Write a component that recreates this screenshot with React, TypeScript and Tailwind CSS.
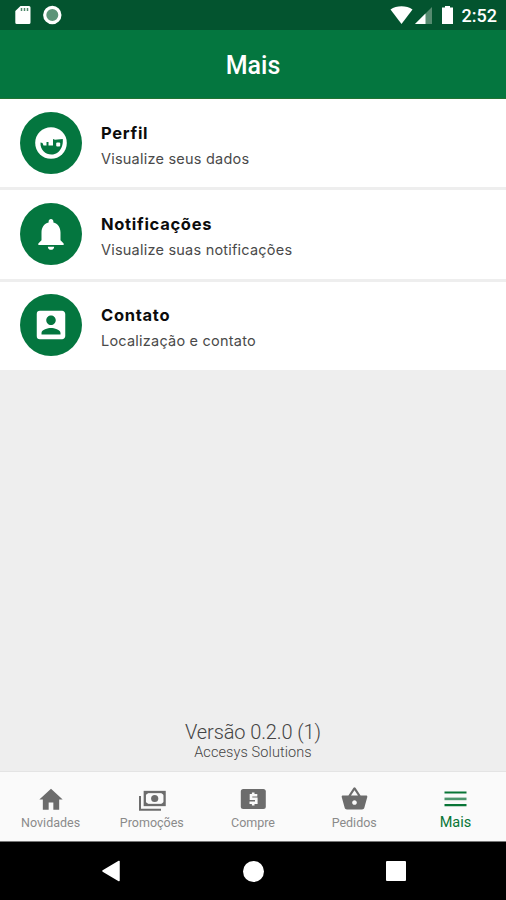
import React from 'react';

interface MenuItem {
  title: string;
  subtitle: string;
  icon: React.ReactNode;
}

interface TabItem {
  label: string;
  icon: React.ReactNode;
  active?: boolean;
}

const FaceIcon = () => (
  <svg width="32" height="32" viewBox="0 0 32 32">
    <circle cx="16" cy="16" r="15.8" fill="#fff" />
    <path d="M5.500 15.500L7.500 16L8.500 18.500H11.500V15H13.500V18.500H18V12L20 12.800L27.800 12C28 15 27.700 18 26.500 20.500C24.500 25 21 27.500 16.500 27.500C10.500 27.500 5 23 5.500 15.500Z" fill="#04763f" />
    <rect x="21.200" y="15.500" width="4" height="4" rx="1" fill="#fff" />
  </svg>
);

const BellIcon = () => (
  <svg width="38" height="38" viewBox="0 0 24 24" fill="#fff">
    <path d="M12 22c1.100 0 2-.9 2-2h-4c0 1.100.89 2 2 2zm6-6v-5c0-3.070-1.640-5.640-4.500-6.320V4c0-.83-.67-1.500-1.500-1.500s-1.500.67-1.500 1.500v.68C7.630 5.360 6 7.920 6 11v5l-2 2v1h16v-1l-2-2z" />
  </svg>
);

const ContactIcon = () => (
  <svg width="38" height="38" viewBox="0 0 24 24" fill="#fff">
    <path d="M3 5v14a2 2 0 0 0 2 2h14c1.100 0 2-.9 2-2V5c0-1.100-.9-2-2-2H5a2 2 0 0 0-2 2zm12 4c0 1.660-1.340 3-3 3s-3-1.340-3-3 1.340-3 3-3 3 1.340 3 3zm-9 8c0-2 4-3.100 6-3.100s6 1.100 6 3.100v1H6v-1z" />
  </svg>
);

const HomeIcon = () => (
  <svg width="28" height="29" viewBox="0 0 24 24" fill="currentColor" preserveAspectRatio="none">
    <path d="M10 20.500V14.500h4v6h5V12h3L12 3 2 12h3v8.500z" />
  </svg>
);

const CashIcon = () => (
  <svg className="mt-[3px]" width="28" height="22" viewBox="0 0 28 22" fill="none" stroke="currentColor">
    <path d="M2 6V19.700H23" strokeWidth="2" />
    <rect x="6.800" y="2" width="19.800" height="13" strokeWidth="2.300" />
    <path d="M6.500 2h5l-5 4zM27 2h-5l5 4zM6.500 15h5l-5-4zM27 15h-5l5-4z" fill="currentColor" stroke="none" />
    <circle cx="16.700" cy="8.500" r="3.600" fill="currentColor" stroke="none" />
  </svg>
);

const DollarIcon = () => (
  <svg width="26" height="22" viewBox="0 0 26 22">
    <rect x="0.800" y="1" width="25" height="20" rx="2.500" fill="currentColor" />
    <path d="M17.300 7.300H11v3.500h5.300v4H9.500M13.200 4.500v3m0 7v3" fill="none" stroke="#fafafa" strokeWidth="2.600" />
  </svg>
);

const BasketIcon = () => (
  <svg width="29" height="28" viewBox="0 0 24 24" fill="currentColor">
    <path d="M17.210 9l-4.380-6.560a1 1 0 0 0-1.660 0L6.790 9H2c-.55 0-1 .45-1 1 0 .09.010.18.040.27l2.540 9.270c.23.84 1 1.460 1.920 1.460h13c.92 0 1.690-.62 1.930-1.460l2.540-9.270L23 10c0-.55-.45-1-1-1h-4.790zM9 9l3-4.400L15 9H9zm3 8c-1.100 0-2-.9-2-2s.9-2 2-2 2 .9 2 2-.9 2-2 2z" />
  </svg>
);

const MenuIcon = () => (
  <svg width="24" height="18" viewBox="0 0 24 18">
    <path d="M1.500 2.500h22M1.500 15.200h22" stroke="#087536" strokeWidth="2.200" />
    <path d="M1.500 8.900h22" stroke="#4c956c" strokeWidth="2.600" />
  </svg>
);

const items: MenuItem[] = [
  { title: 'Perfil', subtitle: 'Visualize seus dados', icon: <FaceIcon /> },
  { title: 'Notificações', subtitle: 'Visualize suas notificações', icon: <BellIcon /> },
  { title: 'Contato', subtitle: 'Localização e contato', icon: <ContactIcon /> },
];

const tabs: TabItem[] = [
  { label: 'Novidades', icon: <HomeIcon /> },
  { label: 'Promoções', icon: <CashIcon /> },
  { label: 'Compre', icon: <DollarIcon /> },
  { label: 'Pedidos', icon: <BasketIcon /> },
  { label: 'Mais', icon: <MenuIcon />, active: true },
];

const StatusBar = () => (
  <div className="flex h-[30px] shrink-0 items-center justify-between bg-[#03542f] pr-[9px] pl-[15px] text-white">
    <div className="flex items-center gap-3">
      <svg width="16" height="20" viewBox="0 0 16 20">
        <path d="M5.500 1H14a1.500 1.500 0 0 1 1.500 1.500v15A1.500 1.500 0 0 1 14 19H1.800a1.500 1.500 0 0 1-1.500-1.500V6z" fill="#fff" />
        <path d="M6.500 3v3M9.500 3v3M12.500 3v3" stroke="#4d8769" strokeWidth="1.500" />
      </svg>
      <svg width="19" height="20" viewBox="0 0 19 20">
        <circle cx="9.300" cy="10" r="7.600" fill="#5c9478" stroke="#fff" strokeWidth="3.200" />
      </svg>
    </div>
    <div className="flex items-center">
      <svg width="66" height="20" viewBox="0 0 66 20">
        <path d="M.5 4.500C6.500.300 16.500.300 22.500 4.500L11.500 19z" fill="#fff" />
        <path d="M42 2v17H25z" fill="#568b70" />
        <path d="M35.500 8.500V19H25z" fill="#fff" />
        <path d="M55 1h5v1.500h3V19H52V2.500h3z" fill="#fff" />
      </svg>
      <span className="ml-[6px] pt-[2px] text-[18px] leading-5 font-medium">2:52</span>
    </div>
  </div>
);

const App: React.FC = () => {
  return (
    <div className="flex h-[900px] w-[506px] flex-col overflow-hidden bg-[#eeeeee] font-[Roboto,sans-serif]">
      <StatusBar />
      <header className="flex h-[69px] shrink-0 items-center justify-center border-b border-[#217333] bg-[#04763f] pt-[3px]">
        <h1 className="text-[25px] leading-8 font-medium text-white">Mais</h1>
      </header>

      <main className="flex min-h-0 flex-1 flex-col">
        <ul className="flex flex-col gap-[3px]">
          {items.map(item => (
            <li key={item.title} className="flex h-[88.400px] items-center gap-[19px] bg-white pl-5">
              <div className="mb-px flex size-[62px] shrink-0 items-center justify-center rounded-full bg-[#04763f]">{item.icon}</div>
              <div className="pt-[5px] font-[Inter,sans-serif] whitespace-nowrap">
                <h2 className="text-[16.500px] leading-[26px] font-bold tracking-[0.700px] text-[#0c0c0c]">{item.title}</h2>
                <p className="text-[14.500px] leading-[26px] tracking-[0.22px] text-[#4a4a4a]">{item.subtitle}</p>
              </div>
            </li>
          ))}
        </ul>
        <footer className="mt-auto pb-[10px] text-center">
          <p className="text-[20px] leading-6 font-light tracking-[-0.1px] text-[#444]">Versão 0.2.0 (1)</p>
          <p className="text-[14.500px] leading-[17px] font-light tracking-[0.1px] text-[#444]">Accesys Solutions</p>
        </footer>
      </main>

      <nav className="flex h-[71px] shrink-0 border-t border-b border-t-[#e4e4e4] border-b-[#777] bg-[#fafafa]">
        {tabs.map(tab => (
          <div key={tab.label} className={`flex flex-1 flex-col items-center pt-[13px] ${tab.active ? 'text-[#087536]' : 'text-[#6c6c6c]'}`}>
            <div className="flex h-7 items-center justify-center">{tab.icon}</div>
            <span className={tab.active ? 'mt-[1px] text-[14.500px] leading-[18px]' : 'mt-[1px] text-[12.500px] leading-[18px] text-[#8a8a8a]'}>{tab.label}</span>
          </div>
        ))}
      </nav>

      <div className="flex h-[58px] shrink-0 items-center justify-between bg-black pr-[100px] pl-[101px]">
        <svg width="20" height="22" viewBox="0 0 20 22">
          <path d="M18 1.500v19L2 11z" fill="#fff" stroke="#fff" strokeWidth="1.500" strokeLinejoin="round" />
        </svg>
        <div className="size-[21px] rounded-full bg-white" />
        <div className="size-[20px] rounded-[1px] bg-white" />
      </div>
    </div>
  );
};

export default App;
